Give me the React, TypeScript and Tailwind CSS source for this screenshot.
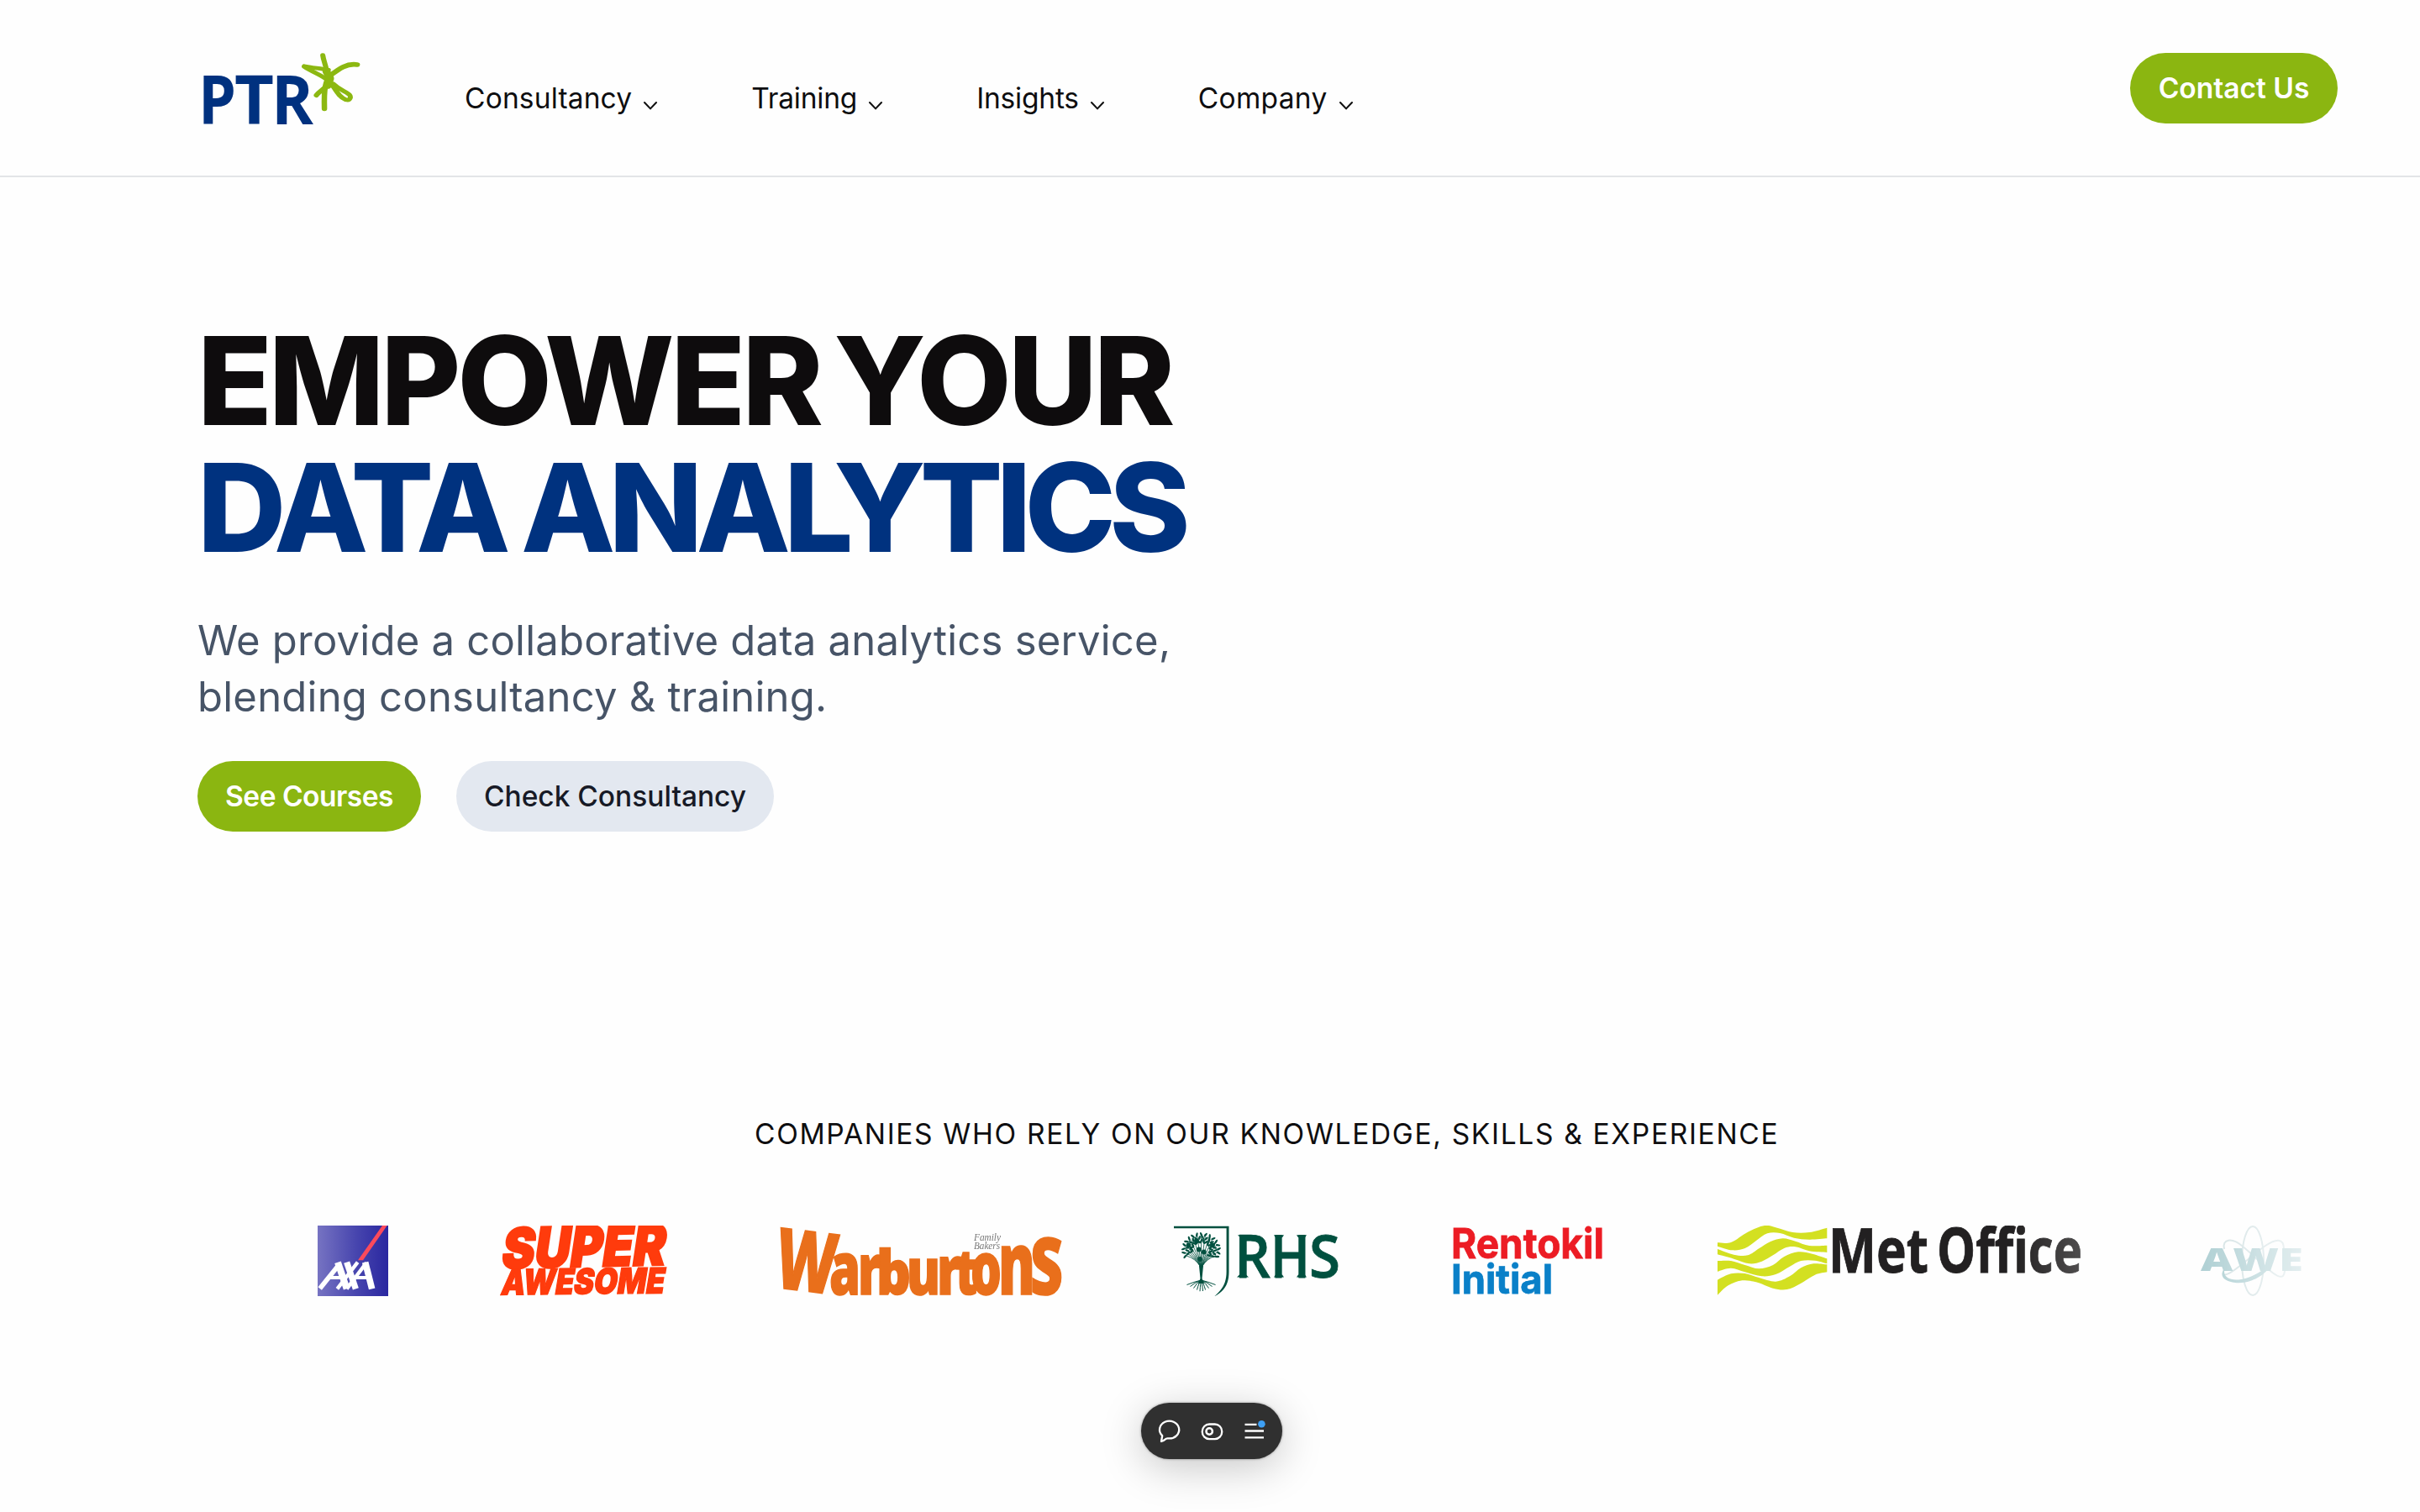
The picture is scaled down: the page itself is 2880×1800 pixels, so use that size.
import React from "react";

type Pt = [number, number];

function smooth(points: Pt[], start = true): string {
  let d = start ? `M${points[0][0]} ${points[0][1]}` : `L${points[0][0]} ${points[0][1]}`;
  for (let i = 0; i < points.length - 1; i++) {
    const p0 = points[i - 1] ?? points[i];
    const p1 = points[i];
    const p2 = points[i + 1];
    const p3 = points[i + 2] ?? p2;
    d += ` C${p1[0] + (p2[0] - p0[0]) / 6} ${p1[1] + (p2[1] - p0[1]) / 6} ${p2[0] - (p3[0] - p1[0]) / 6} ${p2[1] - (p3[1] - p1[1]) / 6} ${p2[0]} ${p2[1]}`;
  }
  return d;
}

function Letters({ x, y, w, size, children, weight = 700, family = "Open Sans", fill }: {
  x: number; y: number; w: number; size: number; children: string; weight?: number; family?: string; fill?: string;
}) {
  return (
    <text x={x} y={y} textLength={w} lengthAdjust="spacingAndGlyphs" fontSize={size} fontWeight={weight} fontFamily={`"${family}", sans-serif`} fill={fill}>
      {children}
    </text>
  );
}

function PtrLogo() {
  return (
    <svg width="200" height="96" viewBox="0 0 200 96" className="block overflow-visible">
      <Letters x={-5} y={88} w={45} size={81} fill="#00317f">P</Letters>
      <Letters x={38} y={88} w={47} size={81} fill="#00317f">T</Letters>
      <Letters x={82} y={88} w={50} size={81} fill="#00317f">R</Letters>
      <g transform="translate(-21 -20)" fill="none" stroke="#8cb811" strokeLinecap="round" strokeLinejoin="round">
        <g transform="scale(.3827 .3333)">
          <path d="M429 78 C431 95 437 110 440 128 C446 148 450 165 440 185 C432 200 420 205 409 220" strokeWidth="16" />
          <path d="M371 116 C395 122 420 124 447 130" strokeWidth="14" />
          <path d="M371 118 C400 140 430 150 450 172 C465 190 475 225 500 236 C515 240 520 225 508 215 C495 205 480 200 462 180" strokeWidth="15" />
          <path d="M536 111 C500 105 475 130 452 150 C438 170 432 190 434 268" strokeWidth="17" />
          <path d="M440 135 L452 160 L445 185" strokeWidth="24" />
        </g>
      </g>
    </svg>
  );
}

function Chevron() {
  return (
    <svg width="18" height="12" viewBox="0 0 18 12" className="mt-[18px] ml-[13px] block" fill="none" stroke="#111" strokeWidth="2.1">
      <path d="M2 2 L9 9.4 L16 2" strokeLinecap="round" strokeLinejoin="round" />
    </svg>
  );
}

function NavItem({ label, className }: { label: string; className: string }) {
  return (
    <a className="flex items-center text-[33.5px] leading-[44px] text-[#0e0e10]">
      <span className={className}>{label}</span>
      <Chevron />
    </a>
  );
}

function AxaLogo() {
  return (
    <svg width="84" height="84" viewBox="0 0 252 252" className="block shrink-0">
      <defs>
        <linearGradient id="axa" x1="0" x2="1">
          <stop offset="0" stopColor="#7673c2" />
          <stop offset=".55" stopColor="#4745ae" />
          <stop offset="1" stopColor="#2a27a0" />
        </linearGradient>
      </defs>
      <rect width="252" height="252" fill="url(#axa)" />
      <path d="M144 124 L231 0 L248 0 L162 124Z" fill="#fb4a5c" />
      <g fill="none" stroke="#fff" strokeLinejoin="bevel">
        <path d="M8 225 L76 140" strokeWidth="17" />
        <path d="M72 131 L104 226" strokeWidth="24" />
        <path d="M38 186 L92 186" strokeWidth="12" />
        <path d="M104 131 L136 226" strokeWidth="22" />
        <path d="M143 131 L70 226" strokeWidth="13" />
        <path d="M174 133 L104 226" strokeWidth="13" />
        <path d="M170 131 L194 226" strokeWidth="23" />
        <path d="M132 186 L184 186" strokeWidth="12" />
      </g>
    </svg>
  );
}

function SuperAwesomeLogo() {
  return (
    <svg width="198" height="84" viewBox="0 0 198 84" className="block shrink-0 overflow-visible" fill="#ff3b0c" stroke="#ff3b0c" strokeWidth="2.4">
      <g transform="translate(-1 51.5) skewX(-10) rotate(-1.4)">
        <Letters x={0} y={0} w={194} size={67} weight={900} family="Inter">SUPER</Letters>
      </g>
      <g transform="translate(-1 82.5) skewX(-10) rotate(-.6)" strokeWidth="1.4">
        <Letters x={0} y={0} w={194} size={42} weight={900} family="Inter">AWESOME</Letters>
      </g>
    </svg>
  );
}

function WarburtonsLogo() {
  return (
    <svg width="335" height="84" viewBox="0 0 335 84" className="block shrink-0 overflow-visible" fill="#e96f1b" stroke="#e96f1b" strokeWidth="1.6">
      <g transform="rotate(7 40 40)">
        <Letters x={-4} y={79} w={73} size={100} weight={800}>W</Letters>
      </g>
      <Letters x={59} y={82} w={37} size={86} weight={800}>a</Letters>
      <Letters x={93} y={82} w={28} size={84} weight={800}>r</Letters>
      <Letters x={115} y={82} w={41} size={72} weight={800}>b</Letters>
      <Letters x={151} y={82} w={40} size={76} weight={800}>u</Letters>
      <Letters x={187} y={82} w={29} size={80} weight={800}>r</Letters>
      <Letters x={209} y={82} w={26} size={75} weight={800}>t</Letters>
      <Letters x={227} y={82} w={37} size={87} weight={800}>o</Letters>
      <Letters x={260} y={82} w={44} size={102} weight={800}>n</Letters>
      <Letters x={298} y={82} w={39} size={94} weight={800}>S</Letters>
      <g fill="#777" stroke="none" fontFamily='"Liberation Serif", serif' fontStyle="italic" fontSize="12">
        <text x="231" y="18" textLength="32" lengthAdjust="spacingAndGlyphs">Family</text>
        <text x="231" y="28" textLength="31" lengthAdjust="spacingAndGlyphs">Bakers</text>
      </g>
    </svg>
  );
}

const branches = Array.from({ length: 17 }, (_, i) => -205 + i * 14.4);

function RhsLogo() {
  return (
    <svg width="198" height="84" viewBox="0 0 198 84" className="block shrink-0 overflow-visible" fill="#00503f">
      <path d="M0 0.8 H65.5 V55 C65.5 70 60 78 48 84.5 C58 76 62.6 68 62.6 55 V3.2 H0Z" />
      <path d="M30 48 L31.5 63 L29 69 H36 L33.5 63 L35 48Z" />
      <g fill="none" stroke="#00503f" strokeWidth="1">
        {branches.map((a, i) => {
          const r = (a * Math.PI) / 180;
          return <path key={i} d={`M32.5 50 Q${32.5 + Math.cos(r) * 8} ${36 + Math.sin(r) * 6} ${32.5 + Math.cos(r) * 19} ${29 + Math.sin(r) * 17}`} strokeWidth=".8" />;
        })}
        {[-17, -13, -9, -5, -1.5, 2, 5, 9, 13, 17].map((x) => (
          <path key={x} d={`M32.5 65 Q${32.5 + x * 0.5} 67 ${32.5 + x} ${79 - Math.abs(x) * 0.5}`} />
        ))}
      </g>
      {branches.map((a, i) =>
        [1, 0.78, 0.56].map((k, j) => {
          const b = a + j * 7;
          const r = (b * Math.PI) / 180;
          return (
            <ellipse key={`${i}-${j}`} rx="2.8" ry="1.2" transform={`translate(${32.5 + Math.cos(r) * 21 * k} ${29 + Math.sin(r) * 18.5 * k}) rotate(${b + (i % 2 ? 25 : -25)})`} />
          );
        })
      )}
      <g>
        <circle cx="17.5" cy="23.5" r="2.9" /><circle cx="27" cy="18.5" r="2.9" /><circle cx="46" cy="23.5" r="2.9" />
        <circle cx="29.7" cy="28.5" r="2.9" /><circle cx="35.7" cy="31.5" r="2.9" /><circle cx="31" cy="40" r="2.9" />
      </g>
      <g stroke="#00503f" strokeWidth=".8">
        <Letters x={72} y={61.5} w={43} size={70} weight={600}>R</Letters>
        <Letters x={115} y={61.5} w={47} size={70} weight={600}>H</Letters>
        <Letters x={161} y={61.5} w={37} size={70} weight={600}>S</Letters>
      </g>
      <path d="M76 11.3 h10 v2 h-8Z M75 61.5 h14 l-3 -3 h-8Z M119 11.3 h12 l-2 3 h-8Z M119 61.5 h12 l-2 -3 h-8Z M146 11.3 h12 l-2 3 h-8Z M146 61.5 h12 l-2 -3 h-8Z" />
    </svg>
  );
}

function RentokilLogo() {
  return (
    <svg width="181" height="84" viewBox="0 0 181 84" className="block shrink-0 overflow-visible">
      <g stroke="#ec1c24" strokeWidth=".8">
        <Letters x={-2} y={38.5} w={182} size={49} family="Inter" fill="#ec1c24">Rentokil</Letters>
      </g>
      <g stroke="#0a80c8" strokeWidth=".8">
        <Letters x={-2} y={80.5} w={121} size={48} family="Inter" fill="#0a80c8">Initial</Letters>
      </g>
    </svg>
  );
}

const waves: [Pt[], Pt[]][] = [
  [[[12, 75], [60, 74], [120, 37], [180, 14], [225, 22], [280, 38], [340, 38], [403, 22]], [[403, 60], [340, 64], [285, 58], [235, 41], [190, 42], [150, 68], [110, 95], [65, 102], [12, 88]]],
  [[[12, 98], [70, 118], [120, 120], [160, 96], [200, 72], [245, 60], [290, 70], [340, 86], [403, 85]], [[403, 110], [340, 105], [290, 90], [250, 95], [210, 120], [170, 142], [125, 150], [70, 133], [12, 117]]],
  [[[12, 140], [60, 140], [110, 155], [160, 168], [210, 155], [250, 125], [300, 108], [350, 115], [403, 132]], [[403, 150], [360, 139], [310, 140], [270, 160], [220, 188], [170, 195], [110, 180], [60, 166], [12, 178]]],
  [[[12, 208], [60, 186], [110, 185], [160, 200], [220, 214], [270, 195], [310, 165], [355, 150], [403, 153]], [[403, 180], [360, 190], [310, 220], [260, 242], [210, 238], [150, 216], [100, 210], [50, 228], [12, 262]]],
];

function MetOfficeLogo() {
  return (
    <svg width="432" height="84" viewBox="0 0 432 84" className="block shrink-0 overflow-visible">
      <g transform="scale(.3333) translate(-12 -14)" fill="#d3e021">
        {waves.map(([top, bottom], i) => (
          <path key={i} d={`${smooth(top)} ${smooth(bottom, false)} Z`} />
        ))}
      </g>
      <g stroke="#222021" strokeWidth=".9">
        <Letters x={132} y={55.5} w={119} size={74} fill="#222021">Met</Letters>
        <Letters x={261} y={55.5} w={173} size={74} fill="#222021">Office</Letters>
      </g>
    </svg>
  );
}

function AweLogo() {
  return (
    <svg width="139" height="84" viewBox="0 0 139 84" className="block shrink-0 overflow-visible opacity-85">
      <g fill="none" stroke="#8fb5ba" strokeWidth="2">
        <ellipse cx="71" cy="42" rx="13" ry="41" />
        <path d="M37 28 C34 16 46 14 58 24 C78 40 100 66 107 60 Q110 56 109 46" />
        <path d="M108 28 C108 14 98 16 86 24 C64 40 42 62 36 58" />
      </g>
      <Letters x={9} y={54} w={122} size={37} weight={800} fill="#2f8590">AWE</Letters>
      <path d="M38 50 C32 66 55 70 78 56 C88 50 94 44 96 38 C92 58 68 70 50 68 C34 66 31 58 38 50Z" fill="#2f8590" />
    </svg>
  );
}

function Toolbar() {
  return (
    <div className="absolute top-[1670px] left-[1358px] flex h-[67px] w-[168px] items-center justify-center rounded-full bg-[#303030] shadow-[0_10px_50px_rgba(0,0,0,0.22),0_0_3px_rgba(0,0,0,0.4)]">
      <svg width="168" height="67" viewBox="0 0 168 67" fill="none" stroke="#fff" strokeWidth="2.3" strokeLinejoin="round">
        <path d="M24 46 L25.2 39.2 A11.6 10.4 0 1 1 32.5 42.4 Q30 42 28.5 43.6 Q27 45 24 46Z" />
        <rect x="72.8" y="25.5" width="23.4" height="17.6" rx="8.4" />
        <circle cx="81.2" cy="34" r="3.7" strokeWidth="2.5" />
        <path d="M123.5 25.8 H137.5 M123.5 33.5 H146 M123.5 41.3 H146" />
        <circle cx="143.4" cy="25.3" r="4.3" fill="#3ea0f5" stroke="none" />
      </svg>
    </div>
  );
}

export default function App() {
  return (
    <div className="relative h-[1800px] w-[2880px] overflow-hidden bg-[#fefefe] font-['Inter',sans-serif]">
      <header className="flex h-[211px] items-start border-b-2 border-[#e3e5e7] pr-[98px] pl-[241px]">
        <div className="mt-[60px]">
          <PtrLogo />
        </div>
        <nav className="mt-[95px] ml-[112px] flex gap-[111px]">
          <NavItem label="Consultancy" className="tracking-[0.16px]" />
          <NavItem label="Training" className="tracking-[-0.2px]" />
          <NavItem label="Insights" className="tracking-[-0.2px]" />
          <NavItem label="Company" className="tracking-[0.3px]" />
        </nav>
        <button className="mt-[63px] ml-auto flex h-[84px] w-[247px] items-center justify-center rounded-full bg-[#8bb611] text-[33.5px] font-semibold text-white">
          Contact Us
        </button>
      </header>

      <main>
        <section className="pl-[235px]">
          <h1 className="pt-[167px] text-[146px] leading-[151px] font-extrabold whitespace-nowrap text-[#0e0c0d]">
            <span className="block tracking-[-4.2px] [word-spacing:-11px]">EMPOWER YOUR</span>
            <span className="block tracking-[-7.8px] text-[#00327f] [word-spacing:-4px]">DATA ANALYTICS</span>
          </h1>
          <p className="mt-[49px] text-[49px] leading-[67px] whitespace-nowrap text-[#475467]">
            <span className="block tracking-[0.23px]">We provide a collaborative data analytics service,</span>
            <span className="block tracking-[0.23px]">blending consultancy &amp; training.</span>
          </p>
          <div className="mt-[43px] flex gap-[42px] text-[33.5px]">
            <button className="flex h-[84px] w-[266px] items-center justify-center rounded-full bg-[#8bb611] font-semibold tracking-[-0.5px] text-white">
              See Courses
            </button>
            <button className="flex h-[84px] w-[378px] items-center justify-center rounded-full bg-[#e3e8f0] font-medium text-[#171a26]">
              Check Consultancy
            </button>
          </div>
        </section>

        <section className="mt-[335px]">
          <p className="pl-[898px] text-[33.5px] leading-[50px] tracking-[1.67px] whitespace-nowrap text-[#0e0e10]">
            COMPANIES WHO RELY ON OUR KNOWLEDGE, SKILLS &amp; EXPERIENCE
          </p>
          <div className="mt-[84px] flex items-center gap-[134px] pl-[378px] [mask-image:linear-gradient(to_right,#000_2395px,transparent_2800px)]">
            <AxaLogo />
            <SuperAwesomeLogo />
            <WarburtonsLogo />
            <RhsLogo />
            <RentokilLogo />
            <MetOfficeLogo />
            <AweLogo />
          </div>
        </section>
      </main>

      <Toolbar />
    </div>
  );
}
